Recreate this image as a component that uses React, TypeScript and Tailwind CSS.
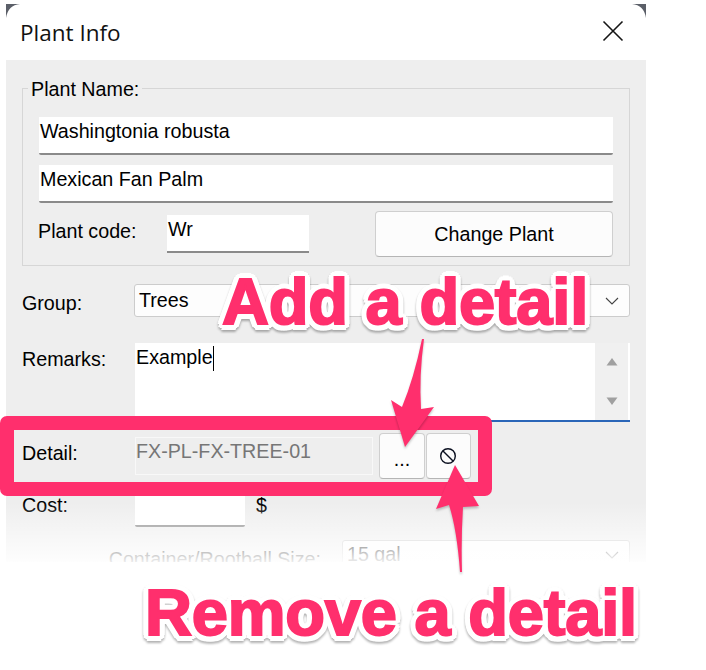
export default function App() {
  const field = "h-[38px] bg-white border-b-[2px] border-[#8a8a8a] rounded-b-[2px] pl-[1px] pt-[2px] leading-[24px]";
  const note = "absolute font-bold text-[#ff2f6d] text-[65px] tracking-[-0.2px] leading-none whitespace-nowrap [font-family:'Liberation_Sans',Arial,sans-serif] [-webkit-text-stroke:2px_#ff2f6d] [text-shadow:6px_0_0_#fff,-6px_0_0_#fff,0_6px_0_#fff,0_-6px_0_#fff,4px_4px_0_#fff,-4px_4px_0_#fff,4px_-4px_0_#fff,-4px_-4px_0_#fff,5.5px_2.5px_0_#fff,-5.5px_2.5px_0_#fff,5.5px_-2.5px_0_#fff,-5.5px_-2.5px_0_#fff,2.5px_5.5px_0_#fff,-2.5px_5.5px_0_#fff,2.5px_-5.5px_0_#fff,-2.5px_-5.5px_0_#fff,3px_0_0_#fff,-3px_0_0_#fff,0_3px_0_#fff,0_-3px_0_#fff] [filter:drop-shadow(0_2px_1px_rgba(0,0,0,0.3))]";
  const btn = "h-[46px] bg-[#fcfcfc] border border-[#cfcfcf] border-b-[#b5b5b5] rounded-[4px] flex items-center justify-center";
  return (
    <div className="relative w-[706px] h-[670px] overflow-hidden bg-white text-[19.7px] text-black [font-family:'Liberation_Sans',Arial,sans-serif]">
      <div className="ml-[6px] pt-[4px] w-[640px]">
        <div className="relative h-[56px] flex items-start justify-between">
          <svg className="absolute left-0 top-0" width="14" height="14" viewBox="0 0 14 14">
            <path d="M0 0H14Q2 1 0 14Z" fill="#5b5f68" />
          </svg>
          <svg className="absolute right-0 top-0" width="14" height="14" viewBox="0 0 14 14">
            <path d="M14 0H0Q12 1 14 14Z" fill="#5b5f68" />
          </svg>
          <div className="ml-[14px] mt-[13px] text-[22.5px] leading-[32px] text-[#111] [font-family:'Open_Sans',sans-serif]">Plant Info</div>
          <svg className="mr-[22px] mt-[16px]" width="22" height="22" viewBox="0 0 22 22">
            <path d="M1.5 1.5L20.5 20.5M20.5 1.5L1.5 20.5" stroke="#151515" strokeWidth="1.6" fill="none" />
          </svg>
        </div>

        <div className="relative h-[502px] overflow-hidden bg-[#eeeeee] pt-[28px] px-[16px]">
          <div className="relative h-[178px] border border-[#d6d6d6] pt-[28px] px-[16px]">
            <div className="absolute left-[5px] top-[-11px] bg-[#eeeeee] px-[3px] leading-[22px]">Plant Name:</div>
            <div className={field}>Washingtonia robusta</div>
            <div className={`${field} mt-[10px]`}>Mexican Fan Palm</div>
            <div className="mt-[8px] flex items-start">
              <div className="w-[128px] mt-[9px] -ml-[1px] mr-[1px] leading-[22px]">Plant code:</div>
              <div className="w-[142px] mt-[4px] h-[38px] bg-white border-b-[2px] border-[#8a8a8a] pl-[1px] pt-[2px] leading-[24px]">Wr</div>
              <div className={`${btn} ml-[66px] w-[238px] pt-[1px]`}>Change Plant</div>
            </div>
          </div>

          <div className="mt-[18px] flex items-start">
            <div className="w-[112px] mt-[8px] leading-[22px]">Group:</div>
            <div className="flex-1 h-[33px] bg-[#fdfdfd] border border-[#cccccc] rounded-[3px] flex items-center justify-between pl-[4px] pr-[10px]">
              <span>Trees</span>
              <svg width="14" height="8" viewBox="0 0 14 8"><path d="M1 1L7 7L13 1" stroke="#444" strokeWidth="1.1" fill="none" /></svg>
            </div>
          </div>

          <div className="mt-[26px] flex items-start">
            <div className="w-[113px] mt-[5px] leading-[22px]">Remarks:</div>
            <div className="flex-1 h-[79px] bg-white border-b-[2px] border-[#2a66b8] flex justify-between">
              <div className="pl-[1px] pt-[2px] leading-[24px] flex items-start">Example<span className="w-[1px] h-[25px] bg-black mt-[1px]" /></div>
              <div className="w-[33px] mr-[2px] bg-[#f0f0f0] flex flex-col items-center justify-between py-[14px]">
                <svg width="12" height="9" viewBox="0 0 12 9"><path d="M6 1L11.5 8.5H0.5Z" fill="#a0a0a0" /></svg>
                <svg width="12" height="9" viewBox="0 0 12 9"><path d="M6 8L11.5 0.5H0.5Z" fill="#a0a0a0" /></svg>
              </div>
            </div>
          </div>

          <div className="mt-[11px] flex items-start">
            <div className="w-[113px] mt-[9px] leading-[22px]">Detail:</div>
            <div className="w-[238px] mt-[4px] h-[38px] border border-[#f8f8f8] text-[#767676] pt-[1px] leading-[24px]">FX-PL-FX-TREE-01</div>
            <div className={`${btn} w-[46px] ml-[6px]`}><span className="mt-[6px] leading-[22px]">...</span></div>
            <div className={`${btn} w-[45px] ml-[1px]`}>
              <svg className="mr-[1px]" width="18" height="18" viewBox="0 0 18 18">
                <circle cx="9" cy="9" r="7.3" stroke="#0b1020" strokeWidth="1.4" fill="none" />
                <path d="M4 4L14 14" stroke="#0b1020" strokeWidth="1.4" />
              </svg>
            </div>
          </div>

          <div className="mt-[10px] flex items-start">
            <div className="w-[113px] mt-[5px] leading-[22px]">Cost:</div>
            <div className="w-[110px] h-[38px] bg-white border-b-[2px] border-[#8a8a8a] rounded-b-[2px]" />
            <div className="ml-[11px] mt-[5px] leading-[22px]">$</div>
          </div>

          <div className="mt-[13px] flex items-start">
            <div className="w-[320px] mt-[8px] pr-[21px] text-right leading-[22px]">Container/Rootball Size:</div>
            <div className="flex-1 h-[33px] bg-[#fdfdfd] border border-[#cccccc] rounded-[3px] flex items-center justify-between pl-[4px] pr-[10px] pb-[3px]">
              <span>15 gal</span>
              <svg width="14" height="8" viewBox="0 0 14 8"><path d="M1 1L7 7L13 1" stroke="#444" strokeWidth="1.1" fill="none" /></svg>
            </div>
          </div>

          <div className="absolute left-0 right-0 bottom-0 h-[60px] bg-gradient-to-b from-[rgba(255,255,255,0)] to-[rgba(255,255,255,0.92)]" />
        </div>
      </div>

      <div className="absolute left-0 top-[416px] w-[492px] h-[80px] border-[14px] border-[#ff2f6d] rounded-[7px]" />

      <svg className="absolute left-0 top-0 pointer-events-none [filter:drop-shadow(0_2px_1px_rgba(0,0,0,0.22))]" width="706" height="670" viewBox="0 0 706 670">
        <path d="M422 339Q414 378 402 407L391 400L405 447L434 407L421 409Q419 375 424 339Z" fill="#ff2f6d" />
        <path d="M455 465L479 506L463 507Q461 540 462 572L460 572Q457 530 449 505L436 509Z" fill="#ff2f6d" />
      </svg>

      <div className={`${note} left-[222px] top-[269px]`}>Add a detail</div>
      <div className={`${note} left-[145px] top-[580px]`}>Remove a detail</div>
    </div>
  );
}
